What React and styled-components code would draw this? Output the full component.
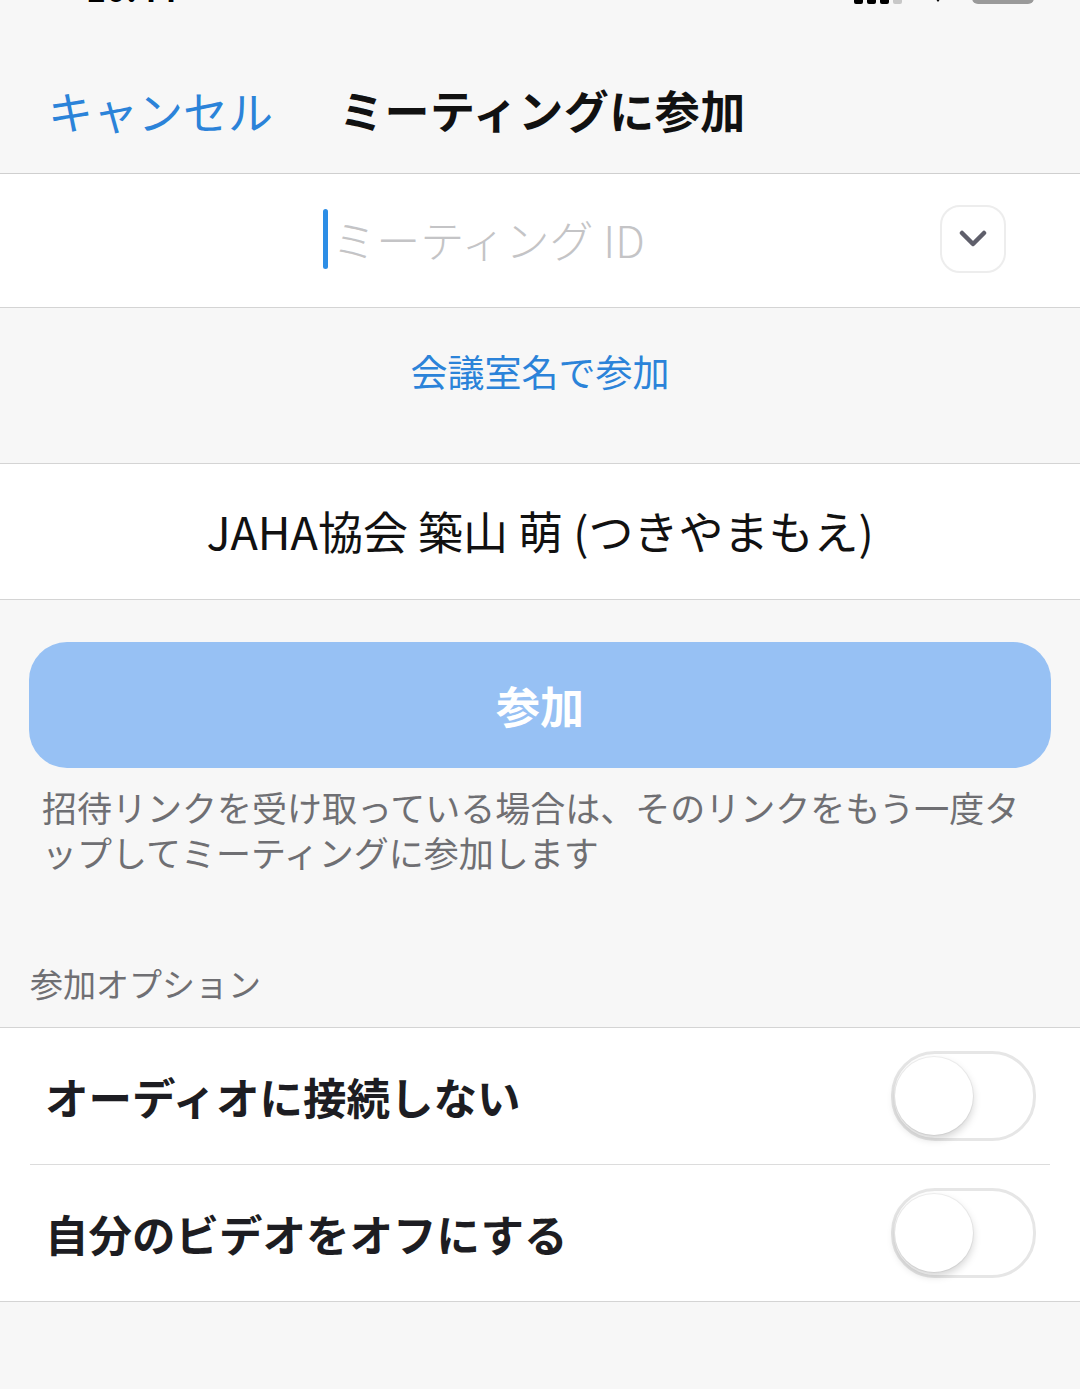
import React from "react";
import styled, { createGlobalStyle } from "styled-components";

const GlobalStyle = createGlobalStyle`
  html, body {
    margin: 0;
    padding: 0;
    background: #f7f7f7;
  }
  body {
    font-family: "Noto Sans CJK JP", "Noto Sans", sans-serif;
    -webkit-font-smoothing: antialiased;
  }
`;

const Page = styled("div")`
  width: 1080px;
  min-height: 1389px;
  background: #f7f7f7;
  display: flex;
  flex-direction: column;
`;

const StatusBar = styled("div")`
  height: 6px;
  overflow: hidden;
  display: flex;
  justify-content: space-between;
  padding: 0 46px 0 86px;
`;

const Clock = styled("span")`
  margin-top: -30px;
  font-size: 34px;
  font-weight: 700;
  line-height: 36px;
  color: #000;
`;

const Indicators = styled("div")`
  display: flex;
  align-items: flex-end;
  gap: 24px;
  margin-top: -20px;
  height: 24px;
`;

const Battery = styled("div")`
  width: 62px;
  height: 24px;
  border-radius: 6px;
  background: #9a9a9a;
`;

const Header = styled("header")`
  height: 168px;
  box-sizing: border-box;
  padding: 40px 48px 0;
  display: flex;
  align-items: center;
  gap: 66px;
  border-bottom: 1px solid #cfcfcf;
`;

const Cancel = styled("button")`
  border: none;
  background: none;
  padding: 0;
  font-family: inherit;
  font-size: 45px;
  color: #2b83d9;
  margin-top: 2px;
`;

const Title = styled("h1")`
  margin: 0;
  font-size: 45px;
  font-weight: 700;
  color: #111;
  letter-spacing: 0.5px;
`;

const InputRow = styled("div")`
  height: 133px;
  background: #fff;
  border-bottom: 1px solid #d4d4d4;
  display: flex;
  align-items: center;
  position: relative;
`;

const InputField = styled("div")`
  flex: 1;
  display: flex;
  justify-content: center;
  align-items: center;
  padding-right: 112px;
  margin-top: -4px;
`;

const Caret = styled("span")`
  width: 5px;
  height: 60px;
  border-radius: 3px;
  background: #2d8ee6;
  margin-right: 4px;
`;

const Placeholder = styled("span")`
  font-size: 44px;
  font-weight: 300;
  color: #c4c4c6;
  letter-spacing: 0;
`;

const DropButton = styled("button")`
  position: absolute;
  right: 74px;
  top: 31px;
  width: 66px;
  height: 68px;
  border-radius: 20px;
  border: 2px solid #ededed;
  background: #fff;
  display: flex;
  align-items: center;
  justify-content: center;
  padding: 0;
`;

const LinkSection = styled("div")`
  height: 156px;
  border-bottom: 1px solid #d4d4d4;
  display: flex;
  justify-content: center;
  padding-top: 40px;
  box-sizing: border-box;
`;

const BlueLink = styled("span")`
  font-size: 37px;
  color: #2b83d9;
  line-height: 46px;
`;

const NameRow = styled("div")`
  height: 135px;
  background: #fff;
  border-bottom: 1px solid #d4d4d4;
  display: flex;
  align-items: center;
  justify-content: center;
`;

const NameText = styled("span")`
  font-size: 45px;
  color: #111;
  margin-top: -2px;
`;

const ButtonArea = styled("div")`
  padding: 42px 29px 0;
`;

const JoinButton = styled("button")`
  width: 100%;
  height: 126px;
  border: none;
  border-radius: 38px;
  background: #97c1f4;
  color: #fff;
  font-family: inherit;
  font-size: 44px;
  font-weight: 700;
  display: flex;
  align-items: center;
  justify-content: center;
`;

const Hint = styled("p")`
  margin: 16px 0 0;
  padding: 0 50px 0 42px;
  font-size: 35px;
  line-height: 45px;
  color: #6f6f73;
`;

const SectionLabel = styled("div")`
  margin-top: 87px;
  padding: 0 30px 22px;
  font-size: 33px;
  line-height: 44px;
  color: #6f6f73;
  border-bottom: 1px solid #d4d4d4;
`;

const Options = styled("div")`
  background: #fff;
  border-bottom: 1px solid #d4d4d4;
`;

const OptionRow = styled("div")`
  height: 136px;
  display: flex;
  align-items: center;
  justify-content: space-between;
  padding: 0 44px 0 45px;
  & + & {
    border-top: 1px solid #dcdcdc;
    margin: 0 30px;
    padding: 0 14px 0 15px;
  }
`;

const OptionText = styled("span")`
  font-size: 43.5px;
  font-weight: 700;
  color: #1d1d22;
`;

const Toggle = styled("div")`
  width: 138px;
  height: 84px;
  border-radius: 44px;
  border: 3px solid #e6e6e6;
  background: #fff;
  display: flex;
  align-items: center;
  padding-left: 1px;
  box-sizing: content-box;
`;

const Knob = styled("div")`
  width: 78px;
  height: 78px;
  border-radius: 50%;
  background: #fff;
  box-shadow: 0 4px 8px rgba(0, 0, 0, 0.18), 0 0 0 1px rgba(0, 0, 0, 0.05);
`;

const Chevron = () => (
  <svg width="28" height="18" viewBox="0 0 28 18">
    <path
      d="M3 3 L14 14 L25 3"
      fill="none"
      stroke="#5f5f6b"
      strokeWidth="4.5"
      strokeLinecap="round"
      strokeLinejoin="round"
    />
  </svg>
);

const Signal = () => (
  <svg width="50" height="10" viewBox="0 0 50 10">
    <rect x="0" y="0" width="9" height="10" rx="2" fill="#000" />
    <rect x="13" y="0" width="9" height="10" rx="2" fill="#000" />
    <rect x="26" y="0" width="9" height="10" rx="2" fill="#000" />
    <rect x="39" y="0" width="9" height="10" rx="2" fill="#c8c8c8" />
  </svg>
);

const Wifi = () => (
  <svg width="20" height="10" viewBox="0 0 20 10">
    <path d="M4 0 L10 8 L16 0 Z" fill="#000" />
  </svg>
);

const OPTIONS = ["オーディオに接続しない", "自分のビデオをオフにする"];

const App = () => (
  <Page>
    <GlobalStyle />
    <StatusBar>
      <Clock>10:44</Clock>
      <Indicators>
        <Signal />
        <Wifi />
        <Battery />
      </Indicators>
    </StatusBar>
    <Header>
      <Cancel>キャンセル</Cancel>
      <Title>ミーティングに参加</Title>
    </Header>
    <InputRow>
      <InputField>
        <Caret />
        <Placeholder>ミーティング ID</Placeholder>
      </InputField>
      <DropButton>
        <Chevron />
      </DropButton>
    </InputRow>
    <LinkSection>
      <BlueLink>会議室名で参加</BlueLink>
    </LinkSection>
    <NameRow>
      <NameText>JAHA協会 築山 萌 (つきやまもえ)</NameText>
    </NameRow>
    <ButtonArea>
      <JoinButton>参加</JoinButton>
    </ButtonArea>
    <Hint>
      招待リンクを受け取っている場合は、そのリンクをもう一度タップしてミーティングに参加します
    </Hint>
    <SectionLabel>参加オプション</SectionLabel>
    <Options>
      {OPTIONS.map((label) => (
        <OptionRow key={label}>
          <OptionText>{label}</OptionText>
          <Toggle>
            <Knob />
          </Toggle>
        </OptionRow>
      ))}
    </Options>
  </Page>
);

export default App;
